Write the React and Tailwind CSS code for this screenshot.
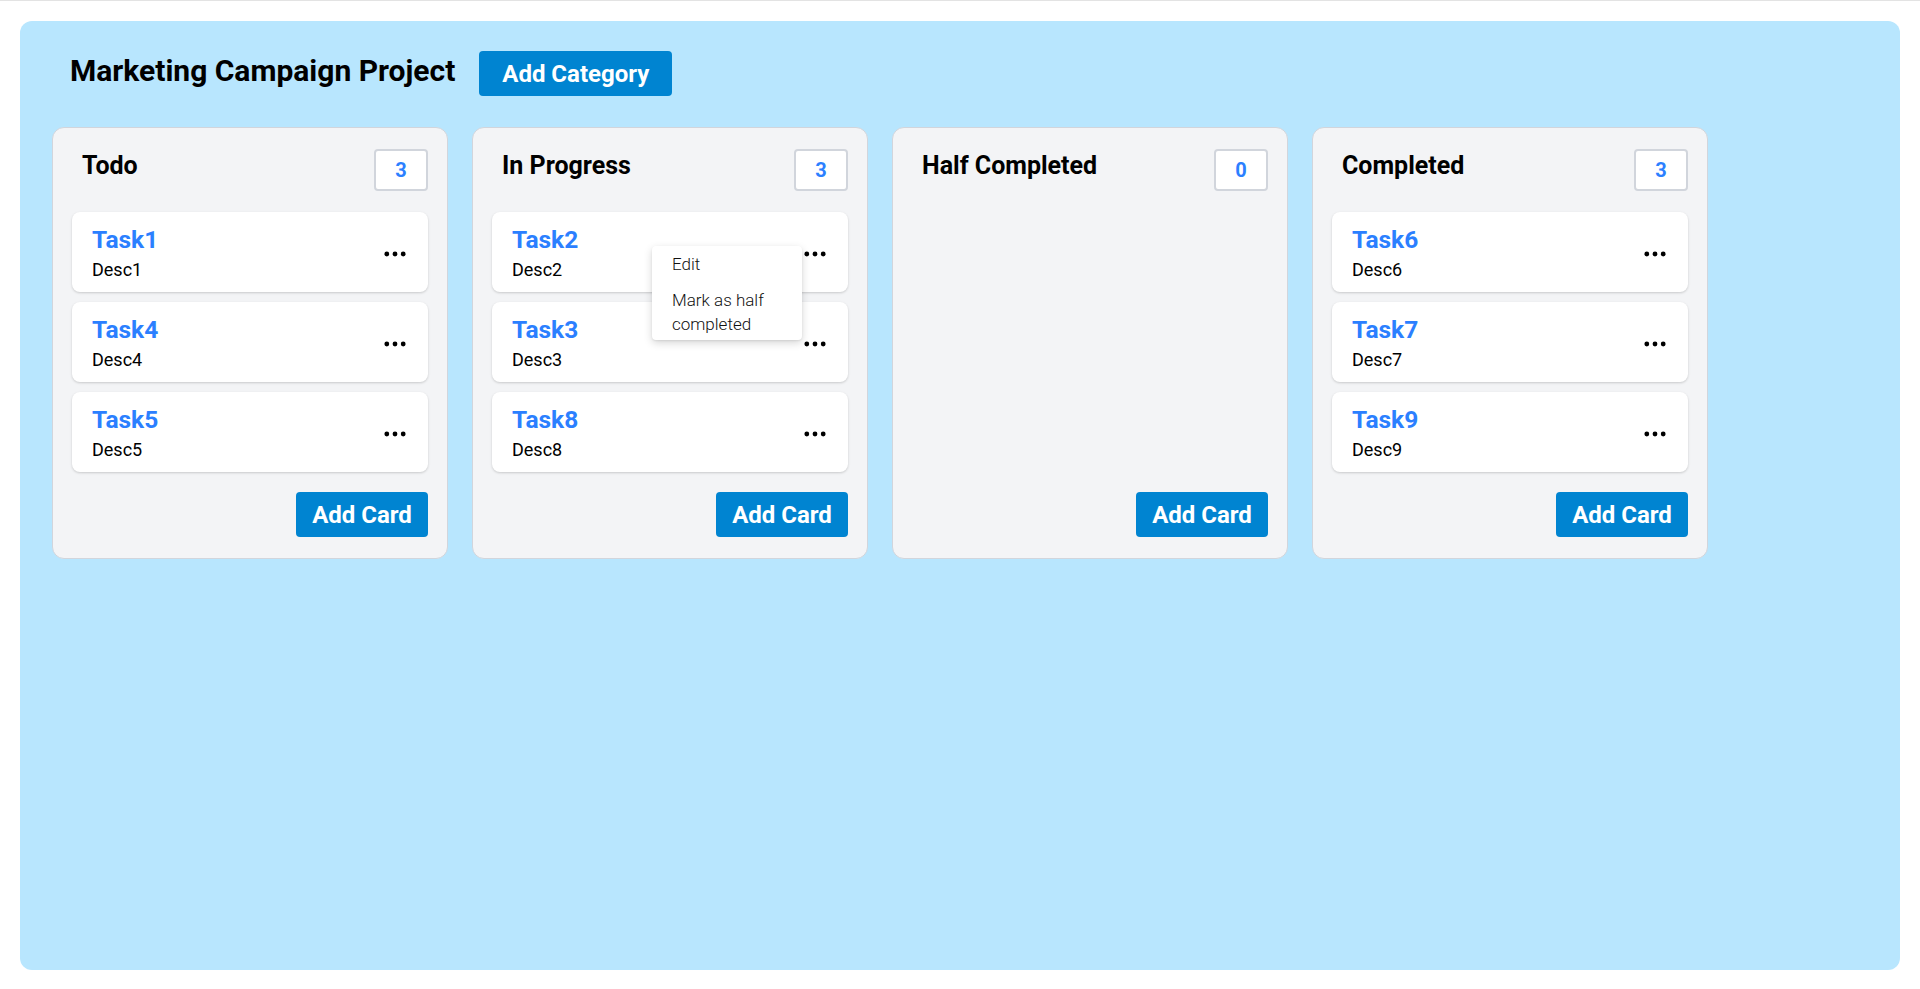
import React from "react";

const columns = [
  { title: "Todo", cards: [["Task1", "Desc1"], ["Task4", "Desc4"], ["Task5", "Desc5"]] },
  { title: "In Progress", cards: [["Task2", "Desc2"], ["Task3", "Desc3"], ["Task8", "Desc8"]], menu: 0 },
  { title: "Half Completed", cards: [] },
  { title: "Completed", cards: [["Task6", "Desc6"], ["Task7", "Desc7"], ["Task9", "Desc9"]] },
];

function Dots() {
  return (
    <svg width="22" height="6" viewBox="0 0 22 6" className="mt-[3px] mr-[12px] shrink-0">
      <circle cx="2.8" cy="3" r="2.4" fill="#000" />
      <circle cx="11" cy="3" r="2.4" fill="#000" />
      <circle cx="19.2" cy="3" r="2.4" fill="#000" />
    </svg>
  );
}

function Menu() {
  return (
    <div className="absolute left-[160px] top-[34px] z-10 w-[150px] rounded-[4px] bg-white text-[17px] font-light leading-6 text-[#111] shadow-[0_3px_8px_rgba(0,0,0,0.16),0_1px_2px_rgba(0,0,0,0.08)]">
      <div className="px-5 pt-[6px] pb-[6px]">Edit</div>
      <div className="px-5 pt-[6px] pb-[4px]">Mark as half completed</div>
    </div>
  );
}

function Card({ title, desc, showMenu }) {
  return (
    <div className="relative flex h-[80px] items-center justify-between rounded-lg bg-white py-[10px] pl-5 pr-[10px] shadow-[0_1px_3px_rgba(0,0,0,0.12),0_1px_2px_rgba(0,0,0,0.06)]">
      <div className="flex flex-col">
        <div className="text-[24.5px] leading-9 font-bold text-blue-500">{title}</div>
        <div className="text-lg leading-6 font-normal text-black">{desc}</div>
      </div>
      <Dots />
      {showMenu && <Menu />}
    </div>
  );
}

function Column({ col }) {
  return (
    <div className="flex w-[396px] flex-col rounded-xl border border-gray-300 bg-gray-100 px-[19px] pt-[19px] pb-[21px]">
      <div className="flex items-start justify-between">
        <h2 className="pt-px pl-[10px] text-[25px] leading-9 font-bold text-black">{col.title}</h2>
        <div className="mt-[2px] flex h-[42px] w-[54px] items-center justify-center rounded-[4px] border-2 border-gray-300 bg-white text-xl font-bold text-blue-500">
          {col.cards.length}
        </div>
      </div>
      <div className="mt-[21px] flex flex-1 flex-col gap-[10px]">
        {col.cards.map(([t, d], i) => (
          <Card key={t} title={t} desc={d} showMenu={col.menu === i} />
        ))}
      </div>
      <button className="mt-5 flex h-[45px] w-[132px] items-center justify-center self-end rounded-[4px] bg-sky-600 text-2xl font-bold text-white">
        Add Card
      </button>
    </div>
  );
}

export default function App() {
  return (
    <div className="min-h-screen bg-white font-['Roboto',sans-serif]">
      <div className="h-px bg-[#e3e3e3]" />
      <div className="mx-5 mt-5 h-[949px] rounded-xl bg-sky-200 px-8 pt-[30px]">
        <div className="flex items-center gap-6 pl-[18px]">
          <h1 className="pb-[6px] text-3xl leading-9 font-bold text-black">Marketing Campaign Project</h1>
          <button className="flex h-[45px] w-[193px] items-center justify-center rounded-[4px] bg-sky-600 text-2xl font-bold text-white">
            Add Category
          </button>
        </div>
        <div className="mt-[31px] flex items-stretch gap-6">
          {columns.map((c) => (
            <Column key={c.title} col={c} />
          ))}
        </div>
      </div>
    </div>
  );
}
